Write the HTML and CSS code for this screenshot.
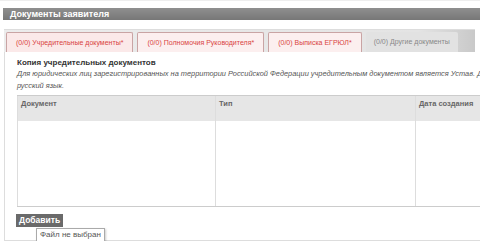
FILE: index.html
```html
<!DOCTYPE html>
<html lang="ru">
<head>
    <meta charset="UTF-8">
    <title>Документы заявителя</title>
    <link rel="stylesheet" href="styles.css">
</head>
<body>

<div class="page">
    <div class="block-title">Документы заявителя</div>

    <div class="tabs">
        <ul class="tab-nav">
            <li class="tab tab-required tab-active">(0/0) Учредительные документы*</li>
            <li class="tab tab-required">(0/0) Полномочия Руководителя*</li>
            <li class="tab tab-required">(0/0) Выписка ЕГРЮЛ*</li>
            <li class="tab">(0/0) Другие документы</li>
        </ul>

        <div class="tab-panel">
            <div class="doc-title">Копия учредительных документов</div>
            <div class="doc-hint">Для юридических лиц зарегистрированных на территории Российской Федерации учредительным документом является Устав. Документы должны быть переведены на русский язык.</div>

            <table class="doc-table">
                <thead>
                    <tr>
                        <th class="col-doc">Документ</th>
                        <th class="col-type">Тип</th>
                        <th class="col-date">Дата создания</th>
                    </tr>
                </thead>
                <tbody>
                    <tr>
                        <td></td>
                        <td></td>
                        <td></td>
                    </tr>
                </tbody>
            </table>

            <div class="upload">
                <button class="btn-add">Добавить</button>
                <div class="file-tip">Файл не выбран</div>
            </div>
        </div>
    </div>
</div>

</body>
</html>
```

FILE: styles.css
```css
html, body {
    margin: 0;
    padding: 0;
    background: #fff;
    overflow: hidden;
}

body {
    font-family: "Liberation Sans", Arial, sans-serif;
    color: #333;
}

.page {
    width: 660px;
    padding: 2px 0 0 3px;
    border-top: 1px solid #eee;
}

.block-title {
    height: 12px;
    margin-top: 5px;
    padding: 0 7px;
    background: linear-gradient(#8f8f8f, #777);
    color: #fff;
    font-size: 9px;
    font-weight: bold;
    line-height: 12px;
}

.tabs {
    margin-top: 9px;
    padding-left: 1px;
}

.tab-nav {
    display: flex;
    width: 469px;
    height: 20px;
    margin: 0;
    padding: 2px 0 0 2px;
    list-style: none;
    background: linear-gradient(90deg, #ececec 0%, #e4e4e4 88%, #c9c9c9 100%);
    border-top: 1px solid #ddd;
}

.tab {
    margin-right: 4px;
    padding: 0 8px;
    height: 20px;
    line-height: 20px;
    font-size: 7px;
    white-space: nowrap;
    color: #888;
    background: #e2e2e2;
    border-radius: 2px 2px 0 0;
}

.tab-required {
    padding: 0 9px;
    color: #d9443f;
    background: #fcefef;
    border: 1px solid #c9a4a4;
    border-bottom: none;
    height: 19px;
}

.tab-active {
    background: #fbe9e9;
}

.tab-panel {
    border-left: 1px solid #ddd;
    border-bottom: 1px solid #ddd;
    padding: 6px 0 2px 12px;
}

.doc-title {
    font-size: 8px;
    font-weight: bold;
    color: #333;
    line-height: 10px;
}

.doc-hint {
    width: 618px;
    font-size: 7.4px;
    font-style: italic;
    color: #555;
    line-height: 12px;
}

.doc-table {
    margin-top: 3px;
    width: 540px;
    border-collapse: collapse;
    font-size: 7.5px;
}

.doc-table th {
    height: 19px;
    padding: 3px 3px;
    text-align: left;
    vertical-align: top;
    font-weight: bold;
    background: #e6e6e6;
    color: #666;
    border-top: 1px solid #ccc;
    border-left: 1px solid #ddd;
}

.doc-table td {
    height: 85px;
    padding: 0;
    border-bottom: 1px solid #ccc;
    border-left: 1px solid #ddd;
}

.col-doc {
    width: 191px;
}

.col-type {
    width: 193px;
}

.upload {
    position: relative;
    display: flex;
    margin-top: 7px;
    height: 24px;
}

.btn-add {
    display: block;
    height: 13px;
    margin-left: -1px;
    padding: 0 3px;
    line-height: 13px;
    background: #6a6a6a;
    color: #fff;
    border: none;
    border-radius: 0;
    font-family: inherit;
    font-size: 8.5px;
    font-weight: bold;
}

.file-tip {
    position: absolute;
    left: 19px;
    top: 14px;
    padding: 1px 3px;
    background: #fff;
    border: 1px solid #aaa;
    font-size: 8px;
    line-height: 10px;
    color: #555;
    box-shadow: 1px 1px 2px rgba(0, 0, 0, 0.2);
}
```
